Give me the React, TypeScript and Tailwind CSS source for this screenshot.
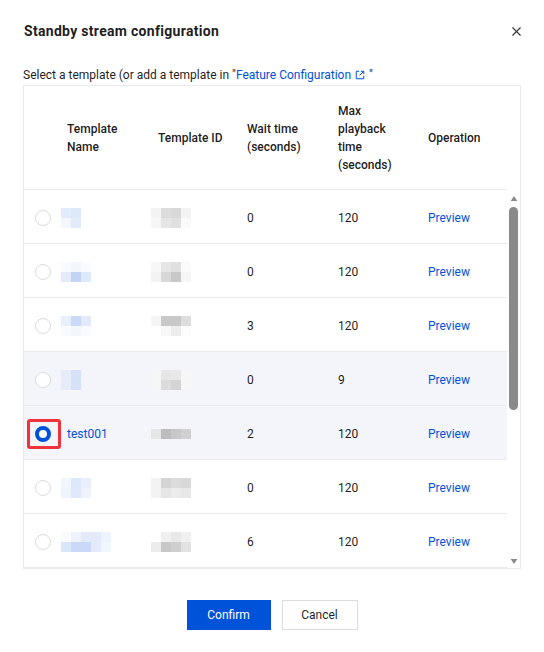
import { X } from "lucide-react";

type Row = {
  name: string[][] | null;
  label?: string;
  id: string[][];
  wait: string;
  max: string;
  selected?: boolean;
  shaded?: boolean;
};

const rows: Row[] = [
  {
    name: [
      ["bg-[#e3ebfb]", "bg-[#dde8fb]"],
      ["bg-[#f4f7fd]", "bg-[#e3ebfb]"],
    ],
    id: [
      ["bg-[#f3f3f3]", "bg-[#dcdcdc]", "bg-[#d8d8d8]", "bg-[#f3f3f3]"],
      ["bg-[#f6f6f6]", "bg-[#e6e6e6]", "bg-[#e0e0e0]", "bg-[#fafafa]"],
    ],
    wait: "0",
    max: "120",
  },
  {
    name: [
      ["bg-[#fafbfe]", "bg-[#f2f6fd]", "bg-[#fafbfe]"],
      ["bg-[#e3ebfb]", "bg-[#c2d4f5]", "bg-[#e0e9fb]"],
    ],
    id: [
      ["bg-[#f7f7f7]", "bg-[#e6e6e6]", "bg-[#e0e0e0]", "bg-[#fafafa]"],
      ["bg-[#f3f3f3]", "bg-[#d8d8d8]", "bg-[#c8c8c8]", "bg-[#f5f5f5]"],
    ],
    wait: "0",
    max: "120",
  },
  {
    name: [
      ["bg-[#e8effc]", "bg-[#c9d9f7]", "bg-[#e3ebfb]"],
      ["bg-[#fafbfe]", "bg-[#f2f6fd]", "bg-[#fafbfe]"],
    ],
    id: [
      ["bg-[#f5f5f5]", "bg-[#c8c8c8]", "bg-[#c8c8c8]", "bg-[#dedede]"],
      ["bg-[#ffffff]", "bg-[#f8f8f8]", "bg-[#ececec]", "bg-[#fcfcfc]"],
    ],
    wait: "3",
    max: "120",
  },
  {
    name: [
      ["bg-[#e6ecf8]", "bg-[#d4e1f7]"],
      ["bg-[#e6ecf8]", "bg-[#d4e1f7]"],
    ],
    id: [
      ["bg-[#f6f6f6]", "bg-[#e6e6e6]", "bg-[#e8e8e8]", "bg-[#f6f6f6]"],
      ["bg-[#f6f6f6]", "bg-[#dcdcdc]", "bg-[#d4d4d4]", "bg-[#f6f6f6]"],
    ],
    wait: "0",
    max: "9",
    shaded: true,
  },
  {
    name: null,
    label: "test001",
    id: [["bg-[#e6e6e6]", "bg-[#bdbdbd]", "bg-[#c8c8c8]", "bg-[#d0d0d0]"]],
    wait: "2",
    max: "120",
    selected: true,
    shaded: true,
  },
  {
    name: [
      ["bg-[#f2f6fd]", "bg-[#dde8fb]", "bg-[#e9effb]"],
      ["bg-[#eef3fd]", "bg-[#e0e9fb]", "bg-[#eef3fd]"],
    ],
    id: [
      ["bg-[#f3f3f3]", "bg-[#d4d4d4]", "bg-[#dcdcdc]", "bg-[#d8d8d8]"],
      ["bg-[#f3f3f3]", "bg-[#e6e6e6]", "bg-[#ececec]", "bg-[#e8e8e8]"],
    ],
    wait: "0",
    max: "120",
  },
  {
    name: [
      ["bg-[#fafbfe]", "bg-[#eef3fd]", "bg-[#e3ebfb]", "bg-[#e3ebfb]", "bg-[#eef3fd]"],
      ["bg-[#dbe5f8]", "bg-[#c9d9f7]", "bg-[#c9d9f7]", "bg-[#e3ebfb]", "bg-[#f2f6fd]"],
    ],
    id: [
      ["bg-[#ffffff]", "bg-[#f0f0f0]", "bg-[#e8e8e8]", "bg-[#f0f0f0]"],
      ["bg-[#ececec]", "bg-[#c8c8c8]", "bg-[#cfcfcf]", "bg-[#e2e2e2]"],
    ],
    wait: "6",
    max: "120",
  },
];

function Mosaic({ cells }: { cells: string[][] }) {
  return (
    <div className="flex flex-col">
      {cells.map((line, i) => (
        <div key={i} className="flex">
          {line.map((c, j) => (
            <div key={j} className={`h-[10px] w-[10px] ${c}`} />
          ))}
        </div>
      ))}
    </div>
  );
}

const cols = "grid grid-cols-[35px_91px_89px_91px_90px_1fr]";

export default function App() {
  return (
    <div
      className="relative h-[652px] w-[544px] bg-white text-[12px] text-[#000000e6]"
      style={{ fontFamily: "Roboto, 'Noto Sans', sans-serif" }}
    >
      {/* Title */}
      <div className="flex items-center justify-between pl-6 pr-[20px] pt-[21px]">
        <h1 className="text-[14px] font-bold leading-[20px] tracking-[0.3px] text-[#000000e6]">
          Standby stream configuration
        </h1>
        <X size={15} strokeWidth={1.8} className="text-[#333]" />
      </div>

      <p className="mt-[24px] px-[23px] leading-[20px] text-[#000000e6]">
        Select a template (or add a template in "
        <span className="text-[#0052d9]">Feature Configuration</span>
        <svg viewBox="0 0 12 12" className="mx-[4px] inline-block h-[10px] w-[10px] align-[-1px]">
          <path d="M5 1.5H1.5v9h9V7" fill="none" stroke="#0052d9" strokeWidth="1.2" />
          <path d="M7 1.5h3.5V5M10.5 1.5 5.5 6.5" fill="none" stroke="#0052d9" strokeWidth="1.2" />
        </svg>
        "
      </p>

      {/* Table */}
      <div className="mx-[23px] flex h-[484px] border border-[#e7eaef]">
        <div className="w-[483px] shrink-0 overflow-hidden">
          <div className={`${cols} h-[104px] items-center border-b border-[#e7eaef] font-medium leading-[18px] text-[#000000e6]`}>
            <div />
            <div className="pl-2">Template<br />Name</div>
            <div className="pl-2">Template ID</div>
            <div className="pl-2">Wait time<br />(seconds)</div>
            <div className="pl-2">Max<br />playback<br />time<br />(seconds)</div>
            <div className="pl-2">Operation</div>
          </div>
          {rows.map((r, i) => (
            <div
              key={i}
              className={`${cols} h-[54px] items-center border-b border-[#e7eaef] pt-[2px] ${r.shaded ? "bg-[#f3f5fa]" : "bg-white"}`}
            >
              <div className="relative flex items-center pl-[11px]">
                {r.selected ? (
                  <>
                    <div className="h-[16px] w-[16px] rounded-full border-[4px] border-[#0052d9] bg-white" />
                    <div className="absolute left-[3px] top-[-7px] h-[30px] w-[34px] rounded-[3px] border-[3px] border-[#f0323c]" />
                  </>
                ) : (
                  <div className="h-[16px] w-[16px] rounded-full border border-[#dcdcdc] bg-white" />
                )}
              </div>
              <div className="pl-2">
                {r.name ? <div className="-ml-[6px]"><Mosaic cells={r.name} /></div> : <span className="text-[#0052d9]">{r.label}</span>}
              </div>
              <div className="pl-2">
                <div className="-ml-[7px]"><Mosaic cells={r.id} /></div>
              </div>
              <div className="pl-2">{r.wait}</div>
              <div className="pl-2">{r.max}</div>
              <div className="pl-2 text-[#0052d9]">Preview</div>
            </div>
          ))}
        </div>
        {/* Scrollbar */}
        <div className="flex flex-1 flex-col">
          <div className="h-[104px]" />
          <div className="flex flex-1 flex-col items-center bg-white">
            <svg viewBox="0 0 8 6" className="mt-[6px] h-[5px] w-[8px]">
              <path d="M4 0 8 6H0z" fill="#8a8a8a" />
            </svg>
            <div className="mt-[6px] h-[203px] w-[9px] rounded-[5px] bg-[#8a8a8a]" />
            <div className="flex-1" />
            <svg viewBox="0 0 8 6" className="mb-[4px] h-[5px] w-[8px]">
              <path d="M0 0h8L4 6z" fill="#8a8a8a" />
            </svg>
          </div>
        </div>
      </div>

      {/* Footer */}
      <div className="mt-[31px] flex justify-center gap-[11px]">
        <button className="h-[30px] w-[84px] bg-[#0052d9] text-[12px] text-white">Confirm</button>
        <button className="h-[30px] w-[76px] border border-[#dcdcdc] bg-white text-[12px] text-[#000000e6]">Cancel</button>
      </div>
    </div>
  );
}
